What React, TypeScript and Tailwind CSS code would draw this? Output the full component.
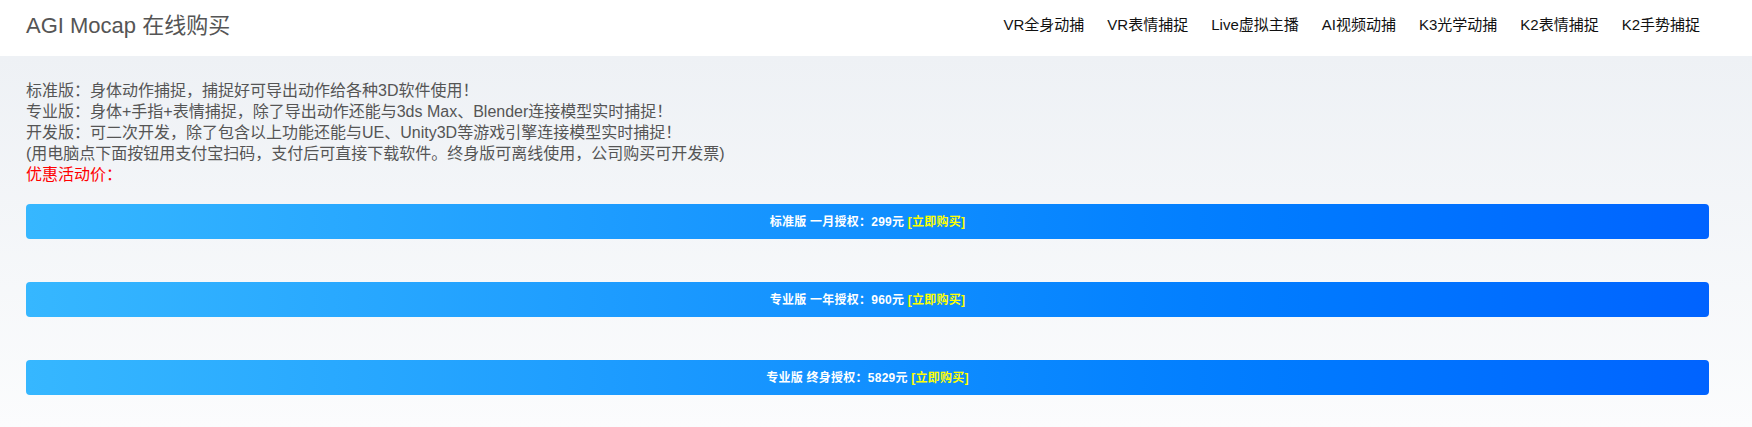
const FONT = { fontFamily: '"Liberation Sans", "Noto Sans CJK SC", sans-serif' };

const navItems = ["VR全身动捕", "VR表情捕捉", "Live虚拟主播", "AI视频动捕", "K3光学动捕", "K2表情捕捉", "K2手势捕捉"];

const plans = [
  { name: "标准版", term: "一月授权：299元" },
  { name: "专业版", term: "一年授权：960元" },
  { name: "专业版", term: "终身授权：5829元" },
];

const BuyButton = ({ name, term }: { name: string; term: string }) => (
  <button className="flex h-[35px] w-full items-center justify-center rounded-[4px] bg-linear-to-r from-[#36b7ff] to-[#0063ff] text-[12px] font-bold tracking-[0.25px] text-white">
    <span>
      {name} {term} <span className="text-[#ffff00]">[立即购买]</span>
    </span>
  </button>
);

export default function App() {
  return (
    <div className="flex min-h-[427px] w-full flex-col" style={FONT}>
      {/* 顶部导航 */}
      <header className="flex h-[56px] items-center justify-between bg-white pb-[5px] pl-[26px] pr-[52px]">
        <span className="text-[22px] text-[#555]">AGI Mocap 在线购买</span>
        <nav className="flex items-center gap-[23px] text-[15px] text-[#111]">
          {navItems.map((item) => (
            <a key={item} href="#">
              {item}
            </a>
          ))}
        </nav>
      </header>

      {/* 说明与购买按钮 */}
      <main className="flex flex-1 flex-col bg-linear-to-b from-[#eef1f5] to-[#fbfcfd] pb-[32px] pl-[26px] pr-[43px] pt-[24px]">
        <div className="text-[16px] leading-[21px] text-[#555]">
          <p>标准版：身体动作捕捉，捕捉好可导出动作给各种3D软件使用！</p>
          <p>专业版：身体+手指+表情捕捉，除了导出动作还能与3ds Max、Blender连接模型实时捕捉！</p>
          <p>开发版：可二次开发，除了包含以上功能还能与UE、Unity3D等游戏引擎连接模型实时捕捉！</p>
          <p>(用电脑点下面按钮用支付宝扫码，支付后可直接下载软件。终身版可离线使用，公司购买可开发票)</p>
          <p className="text-[#ff0000]">优惠活动价：</p>
        </div>
        <div className="mt-[19px] flex flex-col gap-[43px]">
          {plans.map((plan) => (
            <BuyButton key={plan.term} name={plan.name} term={plan.term} />
          ))}
        </div>
      </main>
    </div>
  );
}
